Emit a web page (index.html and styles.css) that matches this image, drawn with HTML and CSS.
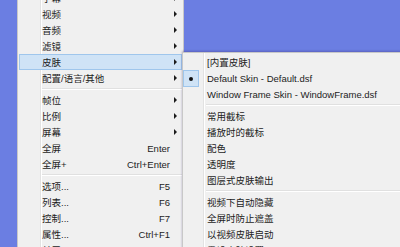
FILE: index.html
```html
<!DOCTYPE html>
<html>
<head>
<meta charset="utf-8">
<link rel="stylesheet" href="styles.css">
</head>
<body>
<div class="desk">
  <div class="menu main">
    <div class="item"><span class="label">字幕</span><span class="arrow"></span></div>
    <div class="item"><span class="label">视频</span><span class="arrow"></span></div>
    <div class="item"><span class="label">音频</span><span class="arrow"></span></div>
    <div class="item"><span class="label">滤镜</span><span class="arrow"></span></div>
    <div class="item hot"><span class="label">皮肤</span><span class="arrow"></span></div>
    <div class="item"><span class="label">配置/语言/其他</span><span class="arrow"></span></div>
    <div class="sep"></div>
    <div class="item"><span class="label">帧位</span><span class="arrow"></span></div>
    <div class="item"><span class="label">比例</span><span class="arrow"></span></div>
    <div class="item"><span class="label">屏幕</span><span class="arrow"></span></div>
    <div class="item"><span class="label">全屏</span><span class="key">Enter</span><span class="noarrow"></span></div>
    <div class="item"><span class="label">全屏+</span><span class="key">Ctrl+Enter</span><span class="noarrow"></span></div>
    <div class="sep"></div>
    <div class="item"><span class="label">选项...</span><span class="key">F5</span><span class="noarrow"></span></div>
    <div class="item"><span class="label">列表...</span><span class="key">F6</span><span class="noarrow"></span></div>
    <div class="item"><span class="label">控制...</span><span class="key">F7</span><span class="noarrow"></span></div>
    <div class="item"><span class="label">属性...</span><span class="key">Ctrl+F1</span><span class="noarrow"></span></div>
    <div class="item"><span class="label">关于...</span><span class="key">F1</span><span class="noarrow"></span></div>
  </div>
  <div class="menu sub">
    <div class="item"><span class="check"></span><span class="label">[内置皮肤]</span></div>
    <div class="item"><span class="check on"><span class="dot"></span></span><span class="label">Default Skin - Default.dsf</span></div>
    <div class="item"><span class="check"></span><span class="label">Window Frame Skin - WindowFrame.dsf</span></div>
    <div class="sep"></div>
    <div class="item"><span class="check"></span><span class="label">常用截标</span></div>
    <div class="item"><span class="check"></span><span class="label">播放时的截标</span></div>
    <div class="item"><span class="check"></span><span class="label">配色</span></div>
    <div class="item"><span class="check"></span><span class="label">透明度</span></div>
    <div class="item"><span class="check"></span><span class="label">图层式皮肤输出</span></div>
    <div class="sep"></div>
    <div class="item"><span class="check"></span><span class="label">视频下自动隐藏</span></div>
    <div class="item"><span class="check"></span><span class="label">全屏时防止遮盖</span></div>
    <div class="item"><span class="check"></span><span class="label">以视频皮肤启动</span></div>
    <div class="item"><span class="check"></span><span class="label">重设皮肤设置</span></div>
  </div>
</div>
</body>
</html>
```
FILE: styles.css
```css
html, body {
  margin: 0;
  padding: 0;
}
body {
  width: 400px;
  height: 247px;
  overflow: hidden;
  background: #6b7ee2;
  font-family: "Liberation Sans", "Noto Sans CJK SC", sans-serif;
  font-size: 9.5px;
  color: #1c1c1c;
}
.desk {
  position: relative;
  width: 400px;
  height: 247px;
}
.menu {
  position: absolute;
  box-sizing: border-box;
  background-color: #f0f0f0;
  border: 1px solid #c8c8c8;
}
.main {
  left: 17px;
  top: -13px;
  width: 167px;
  padding: 2px 1px;
  background-image: linear-gradient(to right, transparent 22px, #e2e2e2 22px, #e2e2e2 23px, #ffffff 23px, #ffffff 24px, transparent 24px);
}
.sub {
  left: 182px;
  top: 52px;
  width: 230px;
  padding: 1px 0;
  border-right: none;
  background-image: linear-gradient(to right, transparent 20px, #e2e2e2 20px, #e2e2e2 21px, #ffffff 21px, #ffffff 22px, transparent 22px);
  box-shadow: 0 -1px 2px rgba(60, 40, 120, 0.35);
}
.item {
  display: flex;
  align-items: center;
  height: 16px;
  box-sizing: border-box;
  white-space: nowrap;
}
.main .item {
  padding-left: 23px;
}
.item.hot {
  background: #cfe3f6;
  border: 1px solid #9fc6ec;
  padding-left: 22px;
}
.label {
  flex: 1;
}
.key {
  text-align: right;
}
.arrow, .noarrow {
  width: 12px;
  display: flex;
  align-items: center;
  justify-content: flex-start;
  padding-left: 4px;
  box-sizing: border-box;
  height: 100%;
}
.item.hot .arrow {
  margin-right: -1px;
}
.arrow::before {
  content: "";
  border-left: 3px solid #1c1c1c;
  border-top: 3px solid transparent;
  border-bottom: 3px solid transparent;
}
.sep {
  height: 6px;
  display: flex;
  flex-direction: column;
  justify-content: center;
}
.sep::before {
  content: "";
  height: 1px;
  background: #e0e0e0;
  border-bottom: 1px solid #ffffff;
}
.main .sep {
  margin-left: 23px;
}
.sub .sep {
  margin-left: 23px;
}
.check {
  width: 16px;
  height: 16px;
  margin-right: 8px;
  box-sizing: border-box;
  display: flex;
  align-items: center;
  justify-content: center;
}
.check.on {
  background: #cfe3f6;
  border: 1px solid #9fc6ec;
  height: 17px;
  margin-top: 1px;
}
.dot {
  width: 4px;
  height: 4px;
  border-radius: 50%;
  background: #111;
}
```
